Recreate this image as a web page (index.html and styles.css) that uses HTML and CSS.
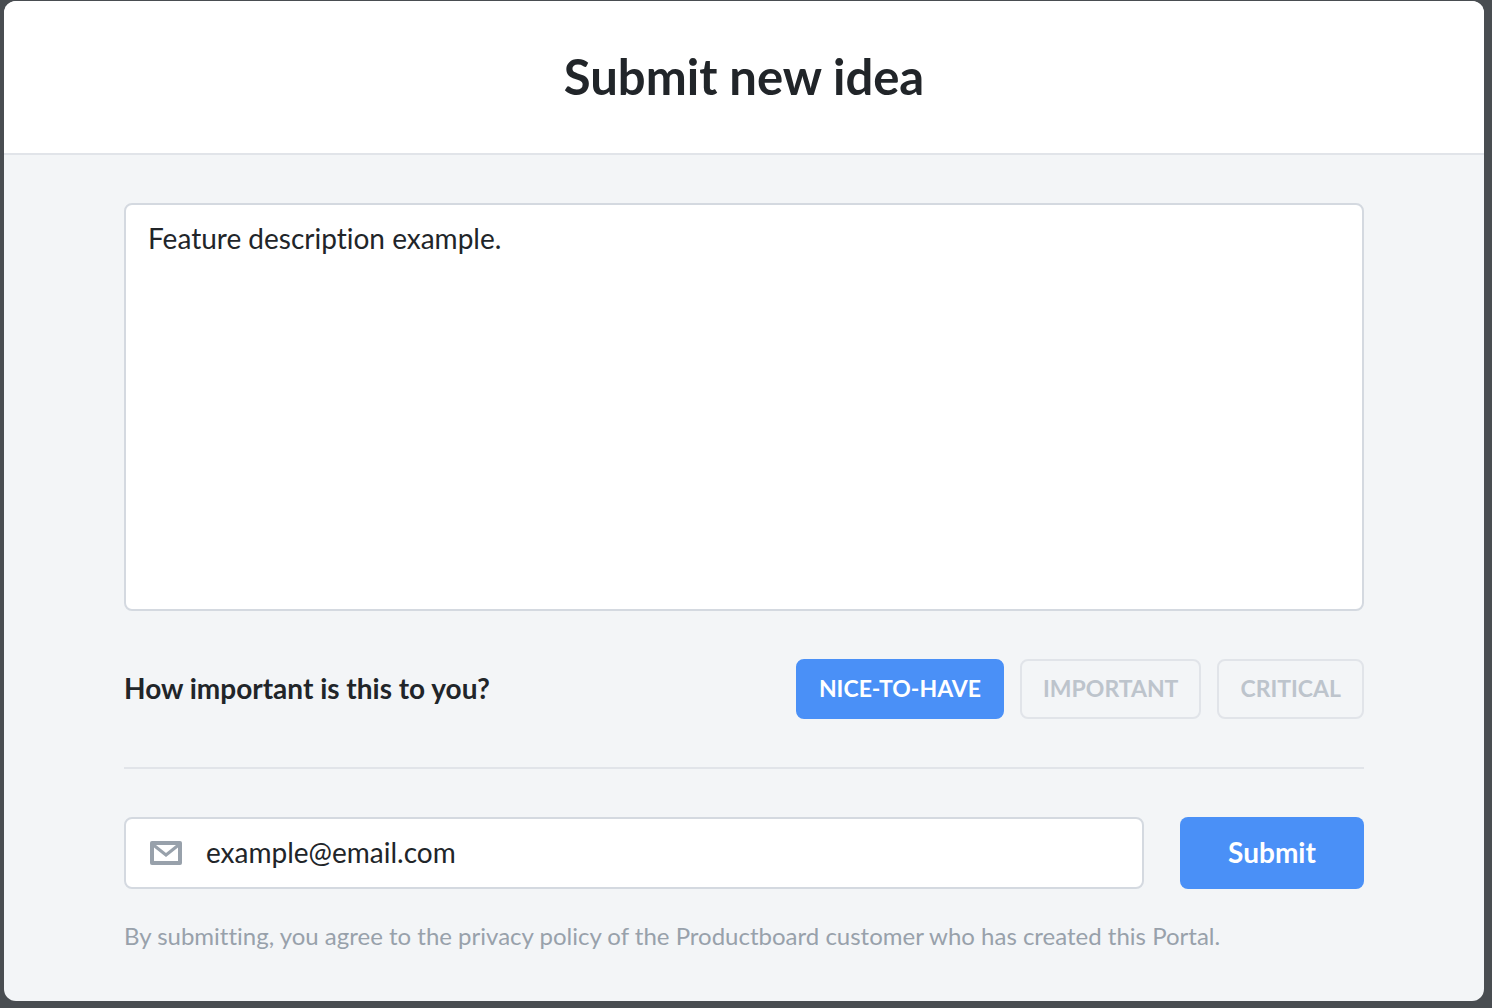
FILE: index.html
```html
<!DOCTYPE html>
<html lang="en">
<head>
  <meta charset="UTF-8" />
  <title>Submit new idea</title>
  <meta name="viewport" content="width=device-width, initial-scale=1.0" />
  <link rel="stylesheet" href="styles.css">
</head>
<body>

  <main class="modal">
    <header class="modal-header">
      <h1>Submit new idea</h1>
    </header>

    <form class="modal-body" onsubmit="return false">
      <textarea class="description" aria-label="Idea description">Feature description example.</textarea>

      <!-- Importance -->
      <div class="importance" role="group" aria-labelledby="importance-label">
        <h2 id="importance-label">How important is this to you?</h2>
        <div class="importance-options">
          <button type="button" class="option-button active" aria-pressed="true">NICE-TO-HAVE</button>
          <button type="button" class="option-button" aria-pressed="false">IMPORTANT</button>
          <button type="button" class="option-button" aria-pressed="false">CRITICAL</button>
        </div>
      </div>

      <!-- Email + submit -->
      <div class="submit-row">
        <label class="email-field">
          <svg class="email-icon" width="32" height="24" viewBox="0 0 32 24" aria-hidden="true">
            <rect width="32" height="24" rx="2" fill="#98a1ab" />
            <path d="M4 6.5V20h24V6.5L16 16z" fill="#fff" />
            <path d="M6 4h20l-10 8z" fill="#fff" />
          </svg>
          <input type="email" aria-label="Email" value="example@email.com">
        </label>
        <button type="submit" class="submit-button">Submit</button>
      </div>

      <p class="privacy">By submitting, you agree to the privacy policy of the Productboard customer who has created this Portal.</p>
    </form>
  </main>

  <script>
    const options = document.querySelectorAll(".option-button");

    options.forEach(option => {
      option.addEventListener("click", () => {
        options.forEach(other => {
          other.classList.toggle("active", other === option);
          other.setAttribute("aria-pressed", other === option);
        });
      });
    });
  </script>

</body>
</html>
```
FILE: styles.css
```css
:root {
  --blue: #4a90f7;
  --text: #212529;
  --muted: #98a1ab;
  --disabled: #bdc4cc;
  --line: #e1e4e9;
  --field-border: #d4d9e0;
  --page: #f3f5f7;
  --backdrop: #494d51;
}

* {
  box-sizing: border-box;
}

body {
  margin: 0;
  padding: 1px 8px 7px 4px;
  min-height: 100vh;
  background-color: var(--backdrop);
  color: var(--text);
  font-family: Lato, sans-serif;
  font-size: 28px;
  font-variant-ligatures: none;
}

button,
input,
textarea {
  font: inherit;
  font-variant-ligatures: none;
  color: inherit;
}

.modal {
  background-color: var(--page);
  border-radius: 12px;
  overflow: hidden;
}

.modal-header {
  padding: 48px 24px 50px;
  background-color: white;
  border-bottom: 2px solid var(--line);
  text-align: center;
}

h1 {
  margin: 0;
  font-size: 49px;
  line-height: 54px;
}

.modal-body {
  padding: 48px 120px 50px;
}

.description {
  display: block;
  width: 100%;
  height: 408px;
  padding: 16px 22px;
  border: 2px solid var(--field-border);
  border-radius: 8px;
  background-color: white;
  line-height: 34px;
  resize: none;
}

.importance {
  display: flex;
  justify-content: space-between;
  align-items: center;
  gap: 24px;
  padding: 48px 0;
  border-bottom: 2px solid var(--line);
}

h2 {
  margin: 0;
  padding-bottom: 2px;
  font-size: 28px;
  line-height: 34px;
}

.importance-options {
  display: flex;
  gap: 16px;
}

.option-button {
  height: 60px;
  padding: 0 21px 2px;
  border: 2px solid var(--line);
  border-radius: 8px;
  background-color: transparent;
  color: var(--disabled);
  font-size: 23px;
  font-weight: bold;
  cursor: pointer;
}

.option-button.active {
  background-color: var(--blue);
  border-color: var(--blue);
  color: white;
}

.submit-row {
  display: flex;
  gap: 36px;
  padding-top: 48px;
}

.email-field {
  flex: 1;
  display: flex;
  align-items: center;
  gap: 24px;
  height: 72px;
  padding: 0 24px;
  border: 2px solid var(--field-border);
  border-radius: 8px;
  background-color: white;
}

.email-icon {
  flex: none;
}

.email-field input {
  flex: 1;
  min-width: 0;
  padding: 0 0 2px;
  border: none;
  outline: none;
  background: none;
}

.submit-button {
  min-width: 184px;
  padding: 0 24px 2px;
  border: none;
  border-radius: 8px;
  background-color: var(--blue);
  color: white;
  font-weight: bold;
  cursor: pointer;
}

.privacy {
  margin: 32px 0 0;
  color: var(--muted);
  font-size: 24px;
  line-height: 30px;
}
```
